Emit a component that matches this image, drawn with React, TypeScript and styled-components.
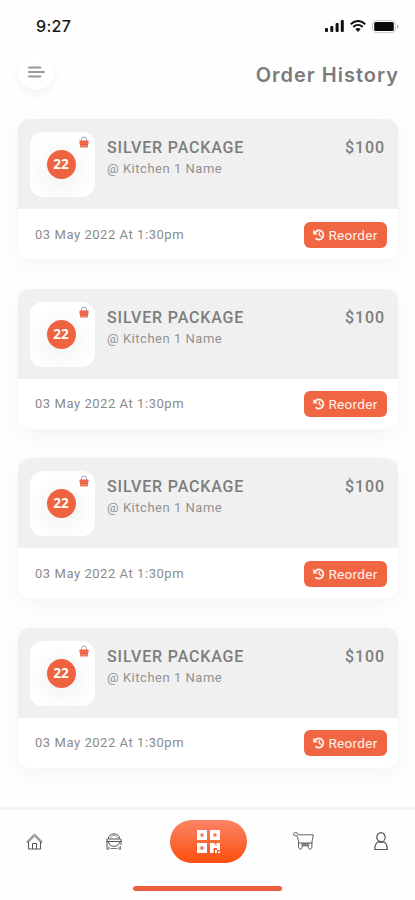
import React from "react";
import styled, { createGlobalStyle } from "styled-components";

const GlobalStyle = createGlobalStyle`
  * { box-sizing: border-box; }
  body { margin: 0; background: #fefefe; font-family: Roboto, "Liberation Sans", sans-serif; }
  svg { display: block; }
  button { font: inherit; border: 0; padding: 0; background: none; }
`;

const Screen = styled.div`
  width: 415px;
  height: 900px;
  display: flex;
  flex-direction: column;
  overflow: hidden;
  background: #fefefe;
`;

const StatusBar = styled.div`
  height: 52px;
  flex: none;
  padding: 0 16px 0 36px;
  display: flex;
  align-items: center;
  justify-content: space-between;
`;

const Clock = styled.span`
  font: 500 16px/20px Inter, sans-serif;
  letter-spacing: 0.3px;
  color: #151515;
`;

const StatusIcons = styled.div`
  display: flex;
  align-items: center;
  gap: 6px;
`;

const Header = styled.header`
  height: 67px;
  flex: none;
  padding: 2px 16px 0 18px;
  display: flex;
  align-items: flex-start;
  justify-content: space-between;
`;

const MenuButton = styled.button`
  width: 36px;
  height: 36px;
  border-radius: 50%;
  background: #fff;
  box-shadow: 0 4px 10px rgba(0, 0, 0, 0.05);
  display: grid;
  place-items: center;
`;

const Title = styled.h1`
  margin: 7px 0 0;
  font: 600 20px/28px Inter, sans-serif;
  letter-spacing: 1px;
  color: #7b7b7b;
`;

const Orders = styled.main`
  flex: none;
  height: 688px;
  padding: 0 17px 0 18px;
  display: flex;
  flex-direction: column;
  gap: 29.6px;
`;

const Card = styled.article`
  height: 140px;
  flex: none;
  border-radius: 12px;
  overflow: hidden;
  background: #fff;
  box-shadow: 0 6px 22px rgba(0, 0, 0, 0.045);
`;

const CardTop = styled.div`
  height: 90px;
  padding: 13px 13px 0 12px;
  display: flex;
  align-items: flex-start;
  background: #f0f0f0;
`;

const Tile = styled.div`
  position: relative;
  width: 65px;
  height: 65px;
  border-radius: 13px;
  display: grid;
  place-items: center;
  padding-right: 3px;
  background: radial-gradient(circle at 48% 58%, #f7f7f7 25%, #fff 68%);
`;

const Count = styled.span`
  width: 29px;
  height: 29px;
  border-radius: 50%;
  background: #f06340;
  color: #fff;
  font: 700 13.5px/28px "Open Sans", sans-serif;
  text-align: center;
`;

const BagMark = styled.span`
  position: absolute;
  top: 4px;
  right: 6px;
`;

const Details = styled.div`
  flex: 1;
  padding: 6px 0 0 12px;
`;

const PackageName = styled.div`
  font-size: 16px;
  line-height: 20px;
  font-weight: 500;
  letter-spacing: 0.85px;
  color: #7d7d7d;
`;

const Kitchen = styled.div`
  margin-top: 2px;
  font-size: 13px;
  line-height: 18px;
  letter-spacing: 0.52px;
  color: #929292;
`;

const Price = styled(PackageName)`
  padding-top: 6px;
  letter-spacing: 0.9px;
`;

const CardBottom = styled.div`
  height: 50px;
  padding: 0 11px 0 17px;
  display: flex;
  align-items: center;
  justify-content: space-between;
`;

const Placed = styled.span`
  font-size: 13px;
  letter-spacing: 0.55px;
  color: #8b8b8b;
`;

const Reorder = styled.button`
  width: 83px;
  height: 26px;
  margin-top: 1px;
  border-radius: 6px;
  background: #f06542;
  color: #fff3ed;
  display: flex;
  align-items: center;
  justify-content: center;
  gap: 3px;
  font-size: 13.5px;
  letter-spacing: 0.3px;
`;

const TabBar = styled.nav`
  height: 71px;
  flex: none;
  border-top: 3px solid #f4f4f4;
  padding-bottom: 6px;
  display: grid;
  grid-template-columns: 69px 89px 101px 88px 67px;
  align-items: center;
  justify-items: center;
`;

const Tab = styled.button`
  color: #555;
`;

const ScanButton = styled.button`
  width: 77px;
  height: 43px;
  border-radius: 22px;
  background: linear-gradient(#fb8566, #fb4e0d);
  display: grid;
  place-items: center;
`;

const HomeIndicator = styled.div`
  width: 149px;
  height: 5px;
  margin: 8px 0 0 133px;
  border-radius: 3px;
  background: #ee6040;
`;

const Signal = () => (
  <svg width="19" height="12" viewBox="0 0 19 12" fill="#111">
    <rect x="0" y="8" width="3" height="4" rx="1" />
    <rect x="5.3" y="6" width="3" height="6" rx="1" />
    <rect x="10.6" y="3" width="3" height="9" rx="1" />
    <rect x="15.8" y="0" width="3" height="12" rx="1" />
  </svg>
);

const Wifi = () => (
  <svg width="16" height="12" viewBox="0 0 16 12" fill="none" stroke="#111" strokeWidth="2">
    <path d="M.8 4.2C5-.1 11-.1 15.2 4.2M3.3 7c2.8-2.7 6.6-2.7 9.4 0" />
    <path d="M5.3 9.1C7 7.7 9 7.7 10.7 9.1L8 12Z" fill="#111" stroke="none" />
  </svg>
);

const Battery = () => (
  <svg width="27" height="13" viewBox="0 0 27 13">
    <rect x=".5" y=".5" width="23" height="12" rx="3.5" fill="none" stroke="#ccc" />
    <rect x="2.2" y="2" width="19.6" height="9" rx="1.5" fill="#090909" />
    <path d="M25 4.500v4c2-.7 2-3.300 0-4" fill="#aaa" />
  </svg>
);

const MenuLines = () => (
  <svg width="17" height="12" viewBox="0 0 17 12" stroke="#999" strokeWidth="1.8" strokeLinecap="round">
    <path d="M1 1.500h11.500M1 6h15M1 10.500h11.500" />
  </svg>
);

const RedBag = () => (
  <svg width="10" height="12" viewBox="0 0 10 12">
    <path d="M2.500 5V3.500a2.500 2.500 0 0 1 5 0V5" fill="none" stroke="#9ca1bd" />
    <path d="M.5 4.500h9V8h-9z" fill="#f06345" />
    <path d="M1 7.500h8v4H1z" fill="#f27a60" />
    <path d="M1 8.500h8" stroke="#cf5540" strokeWidth=".7" />
  </svg>
);

const History = () => (
  <svg width="12" height="12" viewBox="0 0 12 12" fill="none" stroke="#fff3ed" strokeWidth="1.8" strokeLinecap="round">
    <path d="M2 3.400A4.600 4.600 0 1 1 3 9.700" />
    <path d="M.2.800v4.700h4.700z" fill="#fff3ed" stroke="none" />
    <path d="M6.400 3.800v2.400l1.500 1.100" strokeWidth="1.400" />
  </svg>
);

const Home = () => (
  <svg width="17" height="17" viewBox="0 0 17 17" fill="none" stroke="currentColor" strokeWidth="1">
    <path d="M.8 8.900 8.500 1l7.700 7.900-1 .9-6.700-6.900-6.700 6.900Z" />
    <path d="M2.500 9v7h12V9M6.500 16v-5.500h4V16" />
  </svg>
);

const Bag = () => (
  <svg width="16" height="17" viewBox="0 0 16 17" fill="none" stroke="currentColor" strokeWidth="1">
    <path d="M2 6C2.800 2.500 5 .800 8 .800S13.200 2.500 14 6" />
    <path d="M4.200 5.500C5 3.200 6.200 2.400 8 2.400s3 .8 3.800 3.100" strokeWidth=".6" />
    <path d="M1.500 6h13M.3 8.500h15.400M1 6v10.300M15 6v6M2.500 9c.5 3 2.500 4.300 5.500 4.300s5-1.300 5.500-4.300" />
    <path d="M1 16.200h2v-2.700M4.500 15.500h7M13 13.500v2.700h1.500v-3" strokeWidth=".8" />
  </svg>
);

const QrCode = () => (
  <svg width="23" height="23" viewBox="0 0 23 23" fill="#fff">
    <path fillRule="evenodd" d="M0 0h10v10H0ZM3.500 3.500v3h3v-3ZM13 0h10v10H13ZM16.500 3.500v3h3v-3ZM0 13h10v10H0ZM3.500 16.500v3h3v-3Z" />
    <path d="M13 13h4l2.500 3v-3H23v7h-3v-2h-3.500v5H13ZM18 20h2v3h-2ZM21 21.500h2V23h-2Z" />
  </svg>
);

const Cart = () => (
  <svg width="21" height="18" viewBox="0 0 21 18" fill="none" stroke="currentColor" strokeWidth="1">
    <path d="M3.800 3.700H1.500C0 3.700.2.800 1.700.800H4l1.300 2h15L18.800 11H6L4 3.500Z" strokeWidth=".9" />
    <path d="M5.500 10.500v4.300c0 3 3.700 3 3.700 0V13h6v1.800c0 3 3.700 3 3.700 0V10.500M8 11.800h9M9 13.700h6.500" />
  </svg>
);

const Person = () => (
  <svg width="14" height="19" viewBox="0 0 14 19" fill="none" stroke="currentColor" strokeWidth="1.200">
    <ellipse cx="7" cy="5.200" rx="4.200" ry="4.500" />
    <path d="M4.300 9.700C2 10.800.8 13 .8 17.500h12.400c0-4.500-1.200-6.700-3.500-7.800M4.300 10.200h5.400" />
  </svg>
);

const orders = [1, 2, 3, 4].map((id) => ({
  id,
  count: 22,
  name: "SILVER PACKAGE",
  kitchen: "@ Kitchen 1 Name",
  price: "$100",
  placed: "03 May 2022 At 1:30pm",
}));

type Order = (typeof orders)[number];

const OrderCard = ({ order }: { order: Order }) => (
  <Card>
    <CardTop>
      <Tile>
        <Count>{order.count}</Count>
        <BagMark><RedBag /></BagMark>
      </Tile>
      <Details>
        <PackageName>{order.name}</PackageName>
        <Kitchen>{order.kitchen}</Kitchen>
      </Details>
      <Price>{order.price}</Price>
    </CardTop>
    <CardBottom>
      <Placed>{order.placed}</Placed>
      <Reorder><History />Reorder</Reorder>
    </CardBottom>
  </Card>
);

export default function App() {
  return (
    <>
      <GlobalStyle />
      <Screen>
        <StatusBar>
          <Clock>9:27</Clock>
          <StatusIcons><Signal /><Wifi /><Battery /></StatusIcons>
        </StatusBar>
        <Header>
          <MenuButton aria-label="Menu"><MenuLines /></MenuButton>
          <Title>Order History</Title>
        </Header>
        <Orders>
          {orders.map((order) => <OrderCard key={order.id} order={order} />)}
        </Orders>
        <TabBar>
          <Tab aria-label="Home"><Home /></Tab>
          <Tab aria-label="Orders"><Bag /></Tab>
          <ScanButton aria-label="Scan"><QrCode /></ScanButton>
          <Tab aria-label="Cart"><Cart /></Tab>
          <Tab aria-label="Profile"><Person /></Tab>
        </TabBar>
        <HomeIndicator />
      </Screen>
    </>
  );
}
